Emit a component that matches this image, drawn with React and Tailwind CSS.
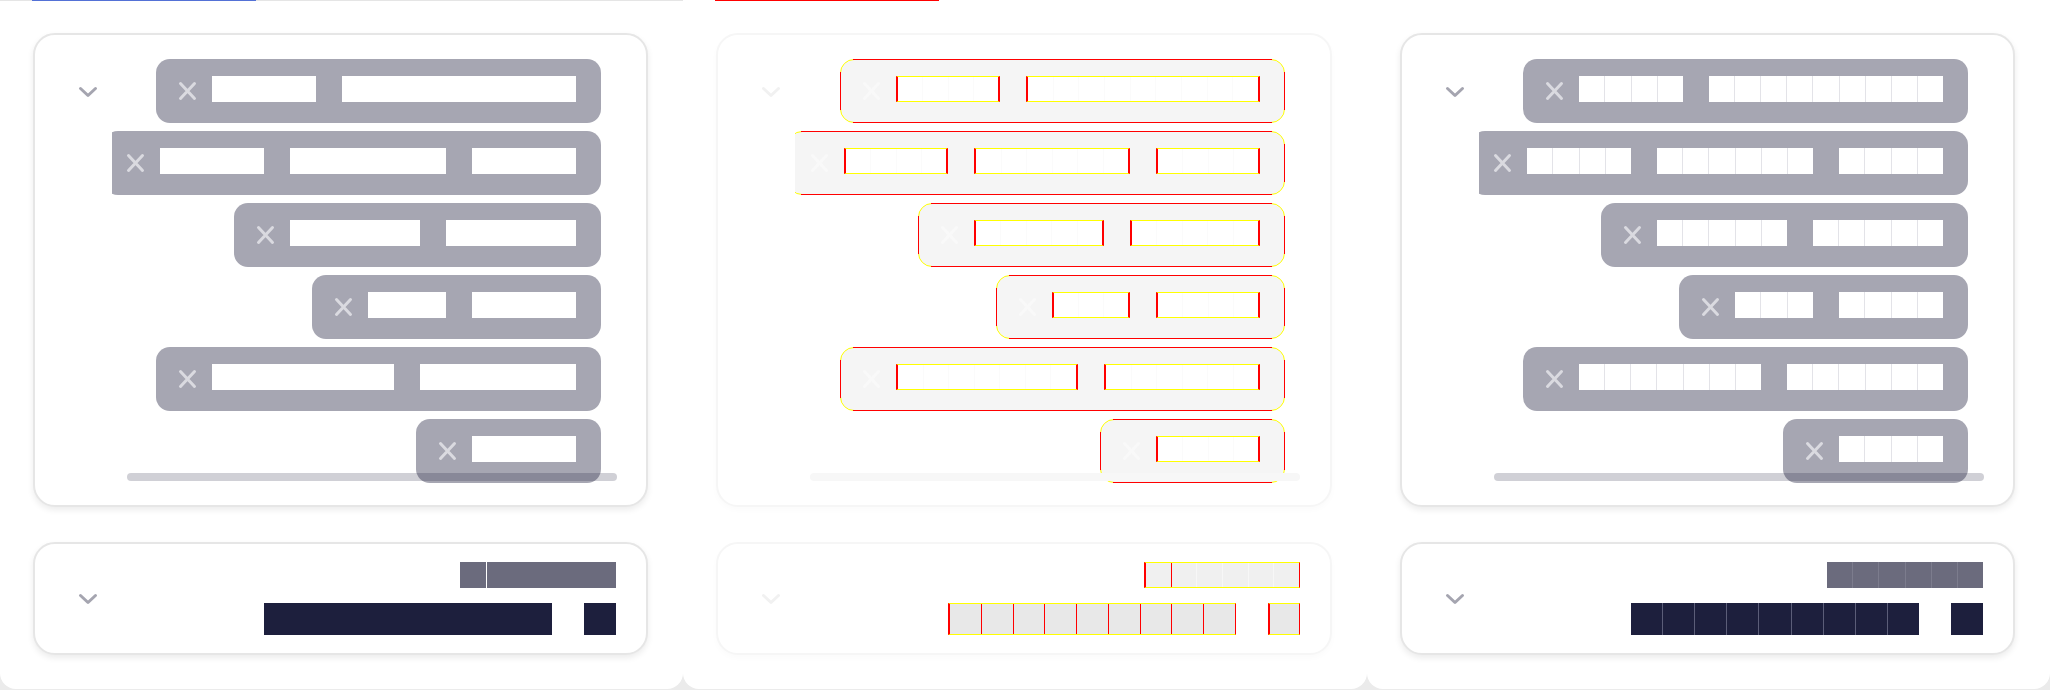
import React from 'react'

const CW = 26 // small block cell
const BW = 32 // large block cell

const chips = [[4, 9], [4, 6, 4], [5, 5], [3, 4], [7, 6], [4]]

const theme = {
  base: {
    card: 'border-[#e6e6e6] shadow-[0_3px_6px_rgba(0,0,0,0.08)]',
    chevron: '#a5a5b0',
    chip: 'bg-[#a6a6b2] border-transparent',
    x: '#dadae0',
    thumb: 'bg-[rgba(20,20,50,0.2)]',
  },
  diff: {
    card: 'border-[#f6f6f6] shadow-[0_3px_6px_rgba(0,0,0,0.02)]',
    chevron: '#f1f1f1',
    chip: 'bg-[#f5f5f5] border-[#ffff00]',
    x: '#f9f9f9',
    thumb: 'bg-[#f7f7f7]',
  },
  grid: {
    card: 'border-[#e6e6e6] shadow-[0_3px_6px_rgba(0,0,0,0.08)]',
    chevron: '#a5a5b0',
    chip: 'bg-[#a6a6b2] border-transparent',
    x: '#dadae0',
    thumb: 'bg-[rgba(20,20,50,0.2)]',
  },
}

const Chevron = ({ color }) => (
  <svg width="20" height="12" viewBox="0 0 20 12" className="shrink-0">
    <path d="M2.5 2.5 10 9.5 17.5 2.5" fill="none" stroke={color} strokeWidth="3" strokeLinecap="round" strokeLinejoin="round" />
  </svg>
)

const XIcon = ({ color }) => (
  <svg width="21" height="20" viewBox="0 0 21 20" className="mt-[5px] shrink-0">
    <path d="M3.5 2.5 17.5 17.5 M17.5 2.5 3.5 17.5" fill="none" stroke={color} strokeWidth="3" strokeLinecap="round" />
  </svg>
)

function Word({ n, v }) {
  const cells = Array.from({ length: n })
  if (v === 'diff') {
    return (
      <div className="flex h-[26px] shrink-0 border-x-2 border-y border-x-[#ff0000] border-y-[#ffff00] bg-white" style={{ width: n * CW }}>
        {cells.map((_, i) => <div key={i} className={`h-full flex-1 ${i ? 'border-l border-[#fbfbfb]' : ''}`} />)}
      </div>
    )
  }
  return (
    <div className="flex h-[26px] shrink-0 bg-white" style={{ width: n * CW }}>
      {v === 'grid' && cells.map((_, i) => <div key={i} className={`h-full flex-1 ${i ? 'border-l border-[#e3e3e8]' : ''}`} />)}
    </div>
  )
}

function Chip({ words, v }) {
  const t = theme[v]
  return (
    <div className={`relative flex h-[64px] w-max shrink-0 items-start rounded-[14px] border pl-[20px] pr-[24px] pt-[16px] ${t.chip}`}>
      <XIcon color={t.x} />
      <div className="ml-[14px] flex gap-[26px]">
        {words.map((n, i) => <Word key={i} n={n} v={v} />)}
      </div>
      {v === 'diff' && (
        <>
          <span className="absolute -top-px left-[12px] right-[12px] h-px bg-[#ff0000]" />
          <span className="absolute -bottom-px left-[12px] right-[12px] h-px bg-[#ff0000]" />
          <span className="absolute -left-px top-[12px] bottom-[12px] w-px bg-[#ff0000]" />
          <span className="absolute -right-px top-[12px] bottom-[12px] w-px bg-[#ff0000]" />
        </>
      )}
    </div>
  )
}

function ChipCard({ v }) {
  const t = theme[v]
  return (
    <div className={`relative flex items-start rounded-[22px] border-2 bg-white pb-[22px] pl-[43px] pr-[45px] pt-[24px] ${t.card}`}>
      <div className="mt-[27px]">
        <Chevron color={t.chevron} />
      </div>
      <div className="ml-[14px] flex flex-1 flex-col items-end gap-2 overflow-hidden">
        {chips.map((w, i) => <Chip key={i} words={w} v={v} />)}
      </div>
      <div className={`absolute left-[92px] top-[438px] h-[8px] w-[490px] rounded-full ${t.thumb}`} />
    </div>
  )
}

// n cells of width w; "marks" are the boundaries drawn strong in the diff view
function Block({ n, w, h, v, fill, gridLine, sep, diffFill, marks }) {
  const cells = Array.from({ length: n })
  if (v === 'diff') {
    return (
      <div className={`flex shrink-0 border-y border-l-2 border-r border-y-[#ffff00] border-l-[#ff0000] border-r-[#ff0000] ${diffFill}`} style={{ width: n * w, height: h }}>
        {cells.map((_, i) => (
          <div key={i} className={`h-full flex-1 ${i ? (marks === 'all' || marks === i ? 'border-l border-[#ff0000]' : 'border-l border-[#f7f7f7]') : ''}`} />
        ))}
      </div>
    )
  }
  return (
    <div className={`flex shrink-0 ${fill}`} style={{ width: n * w, height: h }}>
      {cells.map((_, i) => (
        <div key={i} className={`h-full flex-1 ${i && v === 'grid' ? gridLine : ''} ${i === 1 && v === 'base' && sep ? 'border-l border-white' : ''}`} />
      ))}
    </div>
  )
}

function TextCard({ v }) {
  const t = theme[v]
  return (
    <div className={`mt-[35px] flex items-center rounded-[22px] border-2 bg-white py-[18px] pl-[43px] pr-[30px] ${t.card}`}>
      <Chevron color={t.chevron} />
      <div className="flex flex-1 flex-col items-end gap-[15px]">
        <Block n={6} w={CW} h={26} v={v} fill="bg-[#6b6b7d]" gridLine="border-l border-[#7c7c8d]" sep diffFill="bg-[#f0f0f0]" marks={1} />
        <div className="flex gap-[32px]">
          <Block n={9} w={BW} h={32} v={v} fill="bg-[#1d1f3d]" gridLine="border-l border-[#5b5d78]" diffFill="bg-[#e8e8e8]" marks="all" />
          <Block n={1} w={BW} h={32} v={v} fill="bg-[#1d1f3d]" gridLine="" diffFill="bg-[#e8e8e8]" marks="all" />
        </div>
      </div>
    </div>
  )
}

function Panel({ v, width, tab }) {
  return (
    <div className={`h-[689px] shrink-0 rounded-b-[16px] bg-white ${width}`}>
      <div className={`h-px ${tab === 'blue' ? 'bg-[#e5e5e5]' : ''}`}>
        {tab && <div className={`ml-[32px] h-px w-[224px] ${tab === 'blue' ? 'bg-[#5371d6]' : 'bg-[#ff0000]'}`} />}
      </div>
      <div className="pl-[33px] pr-[35px] pt-[32px]">
        <ChipCard v={v} />
        <TextCard v={v} />
      </div>
    </div>
  )
}

export default function App() {
  return (
    <div className="flex h-[690px] w-[2050px] overflow-hidden bg-[#ebebeb] font-['Inter',sans-serif]">
      <Panel v="base" width="w-[683px]" tab="blue" />
      <Panel v="diff" width="w-[684px]" tab="red" />
      <Panel v="grid" width="w-[683px]" />
    </div>
  )
}
